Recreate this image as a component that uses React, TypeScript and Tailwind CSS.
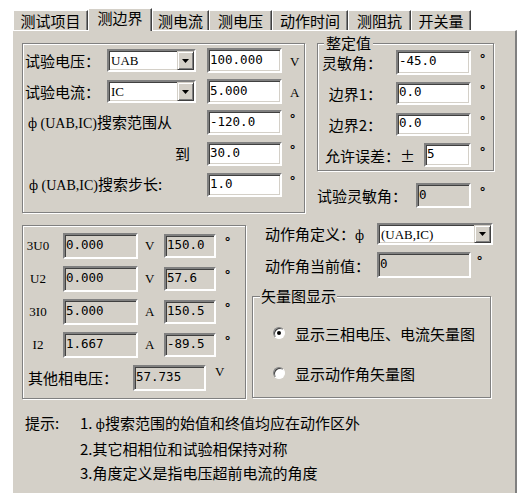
import clsx from "clsx";

const sunken =
  "border-2 border-t-[#808080] border-l-[#808080] border-b-white border-r-white shadow-[inset_1px_1px_0_#404040,inset_-1px_-1px_0_#d4d0c8]";
const etched = "border border-[#808080] shadow-[inset_1px_1px_0_#ffffff,1px_1px_0_#ffffff]";
const serif = "font-['Liberation_Serif',serif] text-[13px]";
const mono = "font-['DejaVu_Sans_Mono',monospace] text-[12.5px]";

type FieldProps = { value: string; className?: string; ro?: boolean };

const Field = ({ value, className, ro }: FieldProps) => (
  <div className={clsx(sunken, mono, "flex items-center pl-[1px] pb-[1px]", ro ? "bg-[#d4d0c8]" : "bg-white", className)}>
    {value}
  </div>
);

const Combo = ({ value, className }: { value: string; className?: string }) => (
  <div className={clsx(sunken, "bg-white flex", className)}>
    <span className={clsx(serif, "flex-1 flex items-center pl-[2px]")}>{value}</span>
    <span className="w-[17px] flex items-center justify-center bg-[#d4d0c8] border border-t-[#d4d0c8] border-l-[#d4d0c8] border-b-[#404040] border-r-[#404040] shadow-[inset_1px_1px_0_#ffffff,inset_-1px_-1px_0_#808080]">
      <svg width="7" height="4" viewBox="0 0 7 4">
        <path d="M0 0h7L3.5 4z" fill="#000" />
      </svg>
    </span>
  </div>
);

const Deg = ({ className }: { className?: string }) => (
  <span className={clsx("font-['Liberation_Sans',sans-serif] text-[13px] font-bold self-start mt-[2px]", className)}>°</span>
);

const Radio = ({ checked, label }: { checked?: boolean; label: string }) => (
  <div className="flex items-center h-[16px]">
    <span className="w-[12px] h-[12px] rounded-full bg-white border border-t-[#808080] border-l-[#808080] border-b-white border-r-white shadow-[inset_1px_1px_0_#404040] flex items-center justify-center">
      {checked && <span className="w-[4px] h-[4px] rounded-full bg-black" />}
    </span>
    <span className="ml-[10px]">{label}</span>
  </div>
);

const tabs = [
  ["测试项目", "w-[75px]"],
  ["测边界", "w-[64px]"],
  ["测电流", "w-[57px]"],
  ["测电压", "w-[63px]"],
  ["动作时间", "w-[76px]"],
  ["测阻抗", "w-[63px]"],
  ["开关量", "w-[60px]"],
];

const meas = [
  ["3U0", "0.000", "V", "150.0"],
  ["U2", "0.000", "V", "57.6"],
  ["3I0", "5.000", "A", "150.5"],
  ["I2", "1.667", "A", "-89.5"],
];

export default function App() {
  return (
    <div className="w-[518px] h-[493px] overflow-hidden bg-white pt-[8px] pl-[12px] text-black text-[15px] leading-none font-['Noto_Sans_CJK_SC',sans-serif]">
      {/* tab strip */}
      <div className="flex items-end h-[22px] pl-[1px]">
        {tabs.map(([label, w], i) =>
          i === 1 ? (
            <div
              key={label}
              className={clsx(
                w,
                "relative z-10 -mb-px h-[23px] bg-[#d4d0c8] border-t border-l border-t-white border-l-white border-r border-r-[#404040] shadow-[inset_-1px_0_0_#808080] flex justify-center pt-[1px]"
              )}
            >
              {label}
            </div>
          ) : (
            <div
              key={label}
              className={clsx(
                w,
                "h-[20px] bg-[#d4d0c8] border-t border-l border-t-white border-l-white border-r border-r-[#404040] shadow-[inset_-1px_0_0_#808080] flex items-center justify-center"
              )}
            >
              {label}
            </div>
          )
        )}
      </div>

      {/* tab page */}
      <div className="w-[505px] h-[463px] bg-[#d4d0c8] border-t border-l border-t-white border-l-white border-r-2 border-r-[#808080] pl-[9px] pt-[12px]">
        <div className="flex items-start">
          <div className={clsx(etched, "w-[283px] h-[170px] pt-[4px] flex flex-col gap-[6px]")}>
            <div className="flex items-center h-[25px]">
              <span className="w-[84px] pl-[2px]">试验电压：</span>
              <Combo value="UAB" className="w-[89px] h-[23px]" />
              <Field value="100.000" className="ml-[11px] w-[75px] h-[25px]" />
              <span className={clsx(serif, "ml-[8px] mt-[2px]")}>V</span>
            </div>
            <div className="flex items-center h-[25px]">
              <span className="w-[84px] pl-[2px]">试验电流：</span>
              <Combo value="IC" className="w-[89px] h-[23px]" />
              <Field value="5.000" className="ml-[11px] w-[75px] h-[25px]" />
              <span className={clsx(serif, "ml-[8px] mt-[2px]")}>A</span>
            </div>
            <div className="flex items-center h-[25px]">
              <span className="w-[184px] pl-[5px]">
                <span className={clsx(serif, "text-[14px]")}>ф (UAB,IC)</span>搜索范围从
              </span>
              <Field value="-120.0" className="w-[75px] h-[25px]" />
              <Deg className="ml-[8px]" />
            </div>
            <div className="flex items-center h-[25px]">
              <span className="w-[184px] text-right pr-[17px]">到</span>
              <Field value="30.0" className="w-[75px] h-[24px]" />
              <Deg className="ml-[8px]" />
            </div>
            <div className="flex items-center h-[25px]">
              <span className="w-[184px] pl-[6px]">
                <span className={clsx(serif, "text-[14px]")}>ф (UAB,IC)</span>搜索步长:
              </span>
              <Field value="1.0" className="w-[75px] h-[24px]" />
              <Deg className="ml-[8px]" />
            </div>
          </div>

          <div className="ml-[12px] w-[177px] flex flex-col">
            <fieldset className={clsx(etched, "-mt-[6px] pb-[3px] min-w-0")}>
              <legend className="ml-[6px] px-[2px] h-[12px] leading-[12px] bg-[#d4d0c8]">整定值</legend>
              <div className="pt-[1px] flex flex-col gap-[7px]">
                <div className="flex items-center h-[24px]">
                  <span className="w-[64px] text-right">灵敏角：</span>
                  <Field value="-45.0" className="ml-[14px] w-[75px] h-[25px]" />
                  <Deg className="ml-[9px]" />
                </div>
                <div className="flex items-center h-[24px]">
                  <span className="w-[64px] text-right">边界1：</span>
                  <Field value="0.0" className="ml-[14px] w-[75px] h-[23px]" />
                  <Deg className="ml-[9px]" />
                </div>
                <div className="flex items-center h-[24px]">
                  <span className="w-[64px] text-right">边界2：</span>
                  <Field value="0.0" className="ml-[14px] w-[75px] h-[23px]" />
                  <Deg className="ml-[9px]" />
                </div>
                <div className="flex items-center h-[24px]">
                  <span className="w-[106px] pl-[7px]">允许误差：±</span>
                  <Field value="5" className="w-[47px] h-[24px]" />
                  <Deg className="ml-[9px]" />
                </div>
              </div>
            </fieldset>
            <div className="flex items-center h-[25px] mt-[12px]">
              <span className="w-[99px]">试验灵敏角：</span>
              <Field ro value="0" className="w-[55px] h-[25px]" />
              <Deg className="ml-[9px]" />
            </div>
          </div>
        </div>

        <div className="flex items-start mt-[10px]">
          <div className={clsx(etched, "mt-[2px] w-[224px] h-[174px] pt-[7px] flex flex-col gap-[8px]")}>
            {meas.map(([l, v, u, a]) => (
              <div key={l} className="flex items-center h-[25px]">
                <span className={clsx(serif, "w-[30px] text-center")}>{l}</span>
                <Field ro value={v} className="ml-[10px] w-[75px] h-[26px]" />
                <span className={clsx(serif, "w-[26px] pl-[7px]")}>{u}</span>
                <Field ro value={a} className="w-[52px] h-[24px]" />
                <Deg className="ml-[9px]" />
              </div>
            ))}
            <div className="flex items-center h-[25px]">
              <span className="w-[110px] pl-[5px]">其他相电压：</span>
              <Field ro value="57.735" className="w-[73px] h-[26px]" />
              <span className={clsx(serif, "ml-[9px] self-start")}>V</span>
            </div>
          </div>

          <div className="ml-[6px] w-[241px] flex flex-col">
            <div className="flex items-center h-[22px]">
              <span className="w-[125px] pl-[13px]">
                动作角定义：<span className={clsx(serif, "text-[14px]")}>ф</span>
              </span>
              <Combo value="(UAB,IC)" className="w-[116px] h-[22px]" />
            </div>
            <div className="flex items-center h-[26px] mt-[7px]">
              <span className="w-[125px] pl-[13px]">动作角当前值：</span>
              <Field ro value="0" className="w-[94px] h-[26px]" />
              <Deg className="ml-[6px]" />
            </div>
            <fieldset className={clsx(etched, "mt-[12px] w-[239px] h-[108px] min-w-0")}>
              <legend className="ml-[7px] px-[1px] h-[12px] leading-[12px] bg-[#d4d0c8]">矢量图显示</legend>
              <div className="pt-[23px] pl-[20px] flex flex-col gap-[24px]">
                <Radio checked label="显示三相电压、电流矢量图" />
                <Radio label="显示动作角矢量图" />
              </div>
            </fieldset>
          </div>
        </div>

        <div className="mt-[16px] flex pl-[3px]">
          <span className="w-[55px]">提示:</span>
          <div className="flex flex-col gap-[9px]">
            <span>
              1. <span className={clsx(serif, "text-[14px]")}>ф</span>搜索范围的始值和终值均应在动作区外
            </span>
            <span>2.其它相相位和试验相保持对称</span>
            <span>3.角度定义是指电压超前电流的角度</span>
          </div>
        </div>
      </div>
    </div>
  );
}
